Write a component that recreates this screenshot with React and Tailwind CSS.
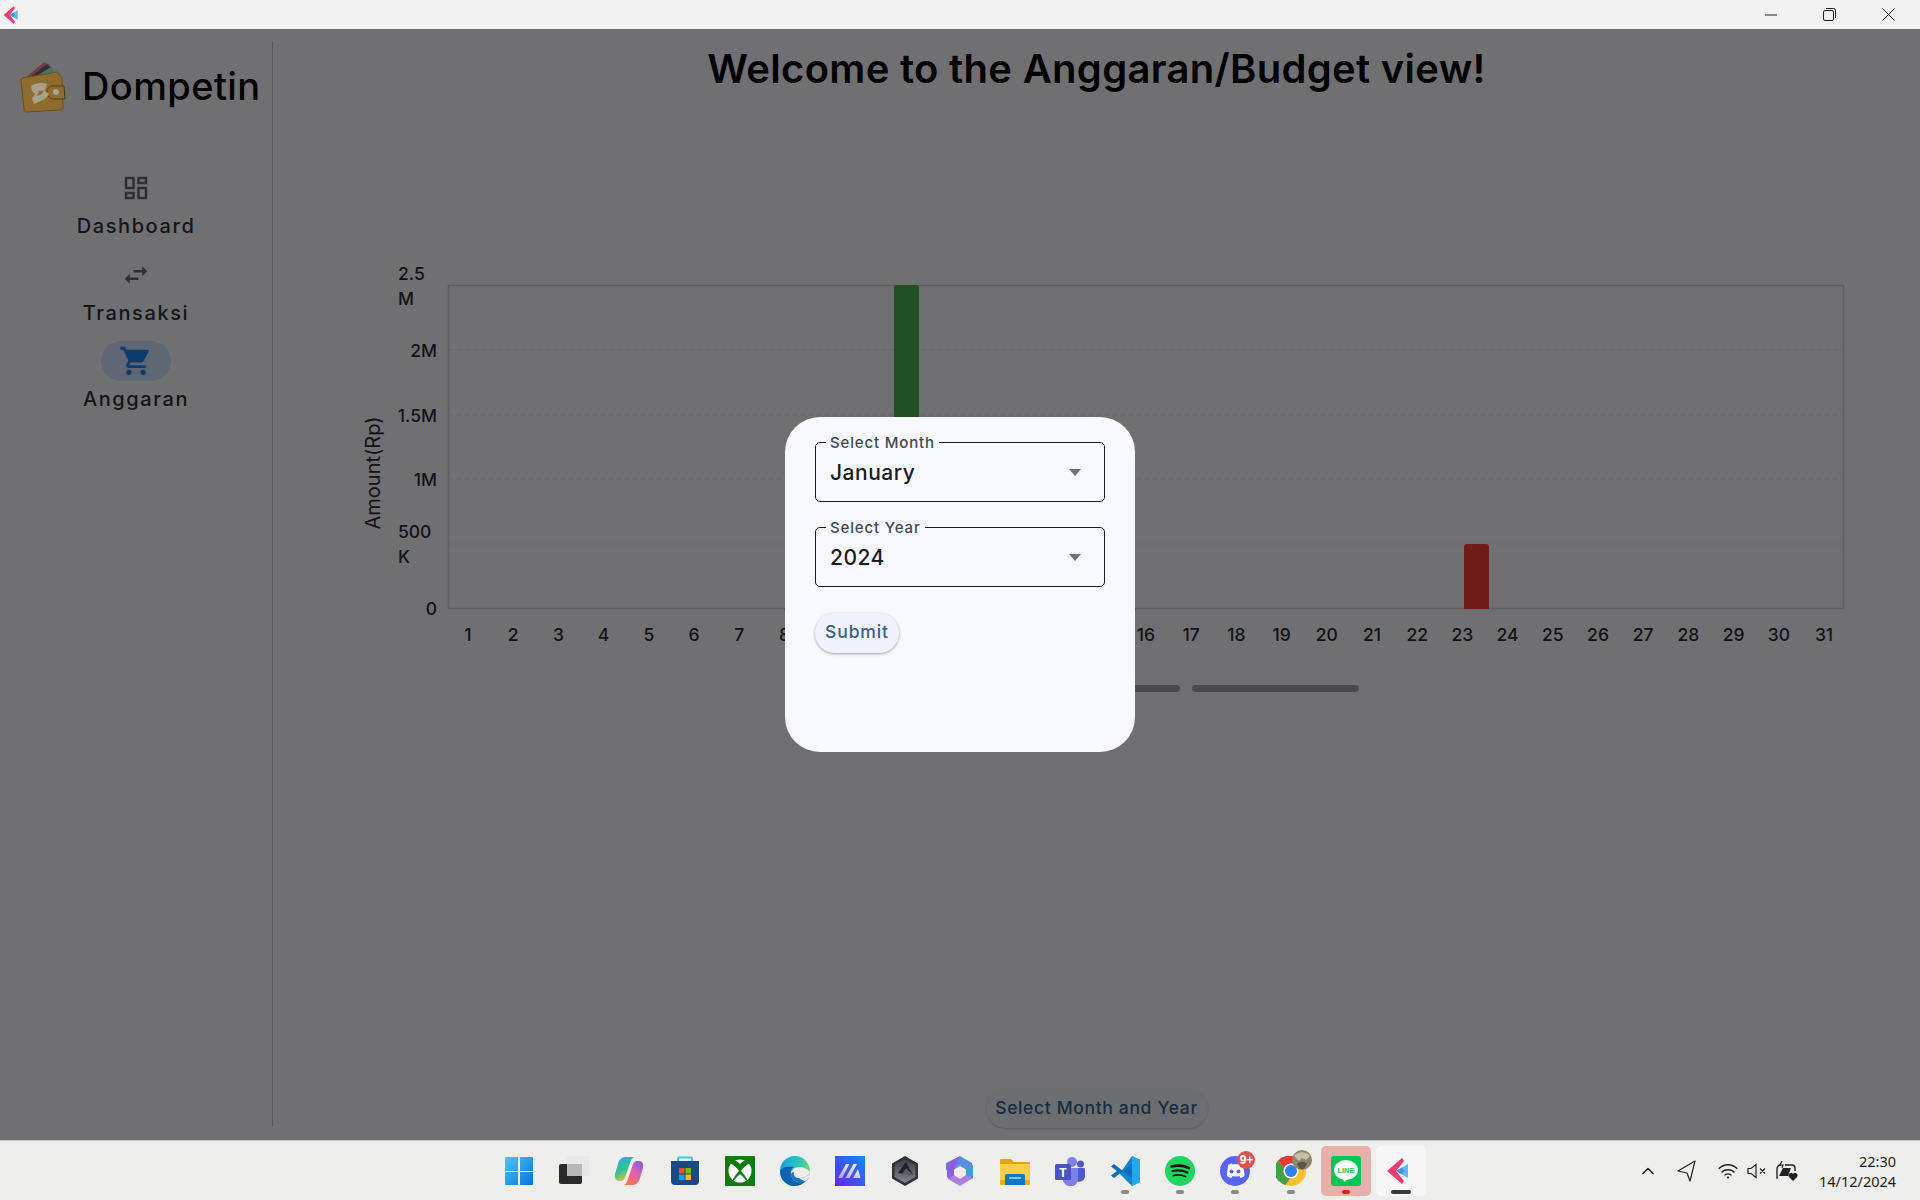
import { ChevronUp } from "lucide-react";

const days = Array.from({ length: 31 }, (_, i) => i + 1);
const gridLines = [350, 415, 479, 544];

function AppArrow({ size = 30 }) {
  return (
    <svg width={size} height={size} viewBox="0 0 30 30">
      <path d="M1 15 16 2l2 3-8 10 8 10-2 3z" fill="#ef3a72" />
      <path d="M22 8 10 15l12 7z" fill="#62b8ee" />
      <path d="M16 11.500 10 15l6 3.500 2-3.500z" fill="#4a8fd8" />
    </svg>
  );
}

// logo keeps its own colours over the scrim, it reads brighter than the dimmed page
function Logo() {
  return (
    <svg className="relative z-10" width="46" height="54" viewBox="0 0 46 54">
      <path d="M4 19 24 2l5 3L11 19z" fill="#7a3c38" />
      <path d="M9 18 27 4l5 4L15 18z" fill="#2f2d3d" />
      <path d="M13 18 31 7l6 8-6 3z" fill="#4c7361" />
      <path d="M3 18c10-2 25-4 33-6 2 0 3 1 3 3l3 3 1 29c0 2-1 3-3 3L7 52c-2 0-3-1-3-3L1 20c0-1 1-2 2-2z" fill="#8f6c2e" stroke="#66501f" strokeWidth="1" />
      <path d="M32 26h12l1 13H33c-3 0-6-3-6-7s3-6 5-6z" fill="#8f6c2e" stroke="#4e3a15" strokeWidth="1" />
      <circle cx="36" cy="32" r="3" fill="#aaa48e" />
      <path d="M11 26c4-3 11-4 16-2l-2 6-6 1-2 5 5-2 2-4 5 4-4 5-11 5-2-6 3-4-3-3z" fill="#a8a18a" />
    </svg>
  );
}

function NavItem({ icon, label, active }) {
  return (
    <div className="flex h-[86.5px] flex-col items-center">
      <div className={`flex h-10 w-[70px] items-center justify-center rounded-full ${active ? "bg-[#d1e4ff]" : ""}`}>
        {icon}
      </div>
      <div className="mt-[3px] h-[30px] text-[20px] leading-[30px] font-medium tracking-[1.6px] text-[#2f3136]">{label}</div>
    </div>
  );
}

function Chart() {
  return (
    <svg width="1647" height="420" viewBox="273 255 1647 420" className="block font-[Inter,sans-serif]">
      {gridLines.map((y) => (
        <line key={y} x1="449" x2="1843" y1={y} y2={y} stroke="#e2e2e7" strokeWidth="1" strokeDasharray="4 4" />
      ))}
      <rect x="448.5" y="285.5" width="1395" height="323" fill="none" stroke="#cfd0d4" strokeWidth="1.5" />
      <path d="M894 609V287a2 2 0 0 1 2-2h21a2 2 0 0 1 2 2v322z" fill="#4caf50" />
      <path d="M1464 609V547a3 3 0 0 1 3-3h19a3 3 0 0 1 3 3v62z" fill="#f44336" />
      <g fontSize="17.5" fontWeight="500" fill="#2b2c30">
        <text x="398" y="280">2.5</text>
        <text x="398" y="305">M</text>
        <text x="437" y="357" textAnchor="end">2M</text>
        <text x="437" y="422" textAnchor="end">1.5M</text>
        <text x="437" y="486" textAnchor="end">1M</text>
        <text x="398" y="538">500</text>
        <text x="398" y="563">K</text>
        <text x="437" y="615" textAnchor="end">0</text>
        {days.map((d) => (
          <text key={d} x={468 + (d - 1) * 45.2} y="641" textAnchor="middle">{d}</text>
        ))}
        <text transform="translate(380 473) rotate(-90)" textAnchor="middle" fontSize="20" fontWeight="400">Amount(Rp)</text>
      </g>
    </svg>
  );
}

function SelectField({ label, value }) {
  return (
    <div className="relative flex h-[60px] w-[290px] items-center justify-between rounded-[5px] border border-[#191c20] pr-[23px] pl-[14px]">
      <span className="absolute top-[-10px] left-[10px] bg-[#f8f9ff] px-1 text-[15px] leading-[20px] font-medium tracking-[0.85px] text-[#43474e]">{label}</span>
      <span className="pt-[2px] text-[21px] font-medium tracking-[0.5px] text-[#191c20]">{value}</span>
      <svg width="12" height="7" viewBox="0 0 12 7"><path d="M0 0h12L6 7z" fill="#6f7074" /></svg>
    </div>
  );
}

function TaskIcon({ children, dot, className = "" }) {
  return (
    <div className={`relative mx-[2.55px] flex h-[50px] w-[50px] items-center justify-center rounded-[5px] ${className}`}>
      {children}
      {dot && <div className={`absolute bottom-[2px] h-[4px] rounded-full ${dot}`} />}
    </div>
  );
}

function WindowsIcon() {
  return (
    <svg width="30" height="30" viewBox="0 0 30 30">
      <defs>
        <linearGradient id="win" x1="0" y1="0" x2="1" y2="1">
          <stop offset="0" stopColor="#4cc6fb" />
          <stop offset="1" stopColor="#0773d4" />
        </linearGradient>
      </defs>
      <path d="M1 2a1 1 0 0 1 1-1h12v14H1zM16 1h12a1 1 0 0 1 1 1v13H16zM1 16h13v13H2a1 1 0 0 1-1-1zM16 16h13v12a1 1 0 0 1-1 1H16z" fill="url(#win)" />
    </svg>
  );
}

function TaskView() {
  return (
    <svg width="30" height="30" viewBox="0 0 30 30">
      <rect x="0" y="8" width="23" height="20" rx="2" fill="#2a2a2a" />
      <rect x="8" y="0" width="22" height="20" rx="2" fill="#e8e8e8" />
      <rect x="8" y="8" width="15" height="12" fill="#b8b8b8" />
    </svg>
  );
}

function Copilot() {
  return (
    <svg width="30" height="30" viewBox="0 0 30 30">
      <defs>
        <linearGradient id="co1" x1="0.2" y1="0" x2="0.6" y2="1">
          <stop offset="0" stopColor="#2aa4e8" />
          <stop offset="0.55" stopColor="#3bc28e" />
          <stop offset="1" stopColor="#f4c23c" />
        </linearGradient>
        <linearGradient id="co2" x1="0.9" y1="0" x2="0.2" y2="1">
          <stop offset="0" stopColor="#7b5ee8" />
          <stop offset="0.5" stopColor="#e65fb0" />
          <stop offset="1" stopColor="#f6783c" />
        </linearGradient>
      </defs>
      <path d="M11 1h9c-2 1-3 3-4 6l-5 15c-1 2-2 3-4 3H5c-3 0-5-3-4-7l3-10c1-4 4-7 7-7z" fill="url(#co1)" />
      <path d="M19 29h-9c2-1 3-3 4-6l5-15c1-2 2-3 4-3h2c3 0 5 3 4 7l-3 10c-1 4-4 7-7 7z" fill="url(#co2)" />
    </svg>
  );
}

function Store() {
  return (
    <svg width="30" height="30" viewBox="0 0 30 30">
      <path d="M8 5V2.500a1 1 0 0 1 1-1h12a1 1 0 0 1 1 1V5" fill="none" stroke="#3ec5f4" strokeWidth="2" />
      <path d="M1 5h28v20a4 4 0 0 1-4 4H5a4 4 0 0 1-4-4z" fill="#1a4a84" />
      <rect x="9" y="12" width="5.500" height="5.500" fill="#f25022" />
      <rect x="15.500" y="12" width="5.500" height="5.500" fill="#7fba00" />
      <rect x="9" y="18.500" width="5.500" height="5.500" fill="#00a4ef" />
      <rect x="15.500" y="18.500" width="5.500" height="5.500" fill="#ffb900" />
    </svg>
  );
}

function Xbox() {
  return (
    <svg width="30" height="30" viewBox="0 0 30 30">
      <rect width="30" height="30" rx="1" fill="#107c10" />
      <circle cx="15" cy="15" r="11.500" fill="#fff" />
      <path d="M7 3c4 1 6 3 8 5 2-2 4-4 8-5l2 4c-4 2-7 5-9 8 3 3 6 7 7 11l-8-8-8 8c1-4 4-8 7-11-2-3-5-6-9-8z" fill="#107c10" />
    </svg>
  );
}

function Edge() {
  return (
    <svg width="30" height="30" viewBox="0 0 30 30">
      <defs>
        <linearGradient id="ed" x1="0" y1="0.3" x2="1" y2="0.5">
          <stop offset="0" stopColor="#1b9de2" />
          <stop offset="0.6" stopColor="#2fc4b8" />
          <stop offset="1" stopColor="#6fdc6c" />
        </linearGradient>
      </defs>
      <path d="M15 0C6 0 0 7 0 15c0 8 6 15 14 15 5 0 9-2 12-5-8 3-14 0-15-6-1-4 3-8 8-8 4 0 9 2 11 5 0-9-6-16-15-16z" fill="url(#ed)" />
      <path d="M0 15c0 8 6 15 14 15 5 0 9-2 12-5-8 3-14 0-15-6-1-4 1-7 3-8-6-1-13 0-14 4z" fill="#0f62b0" />
      <path d="M11 19c1 6 7 9 15 6 2-1 3-3 4-8-3 4-7 5-11 5-3 0-6-2-5-6-2 0-3 1-3 3z" fill="#1a78c8" />
      <path d="M19 22c4 0 8-1 11-5 0 4-2 6-4 8-2 0-5-1-7-3z" fill="#eeeeec" />
    </svg>
  );
}

function MaIcon() {
  return (
    <svg width="30" height="30" viewBox="0 0 30 30">
      <defs>
        <linearGradient id="ma" x1="0" y1="1" x2="1" y2="0">
          <stop offset="0" stopColor="#6a22f0" />
          <stop offset="1" stopColor="#0d8cf2" />
        </linearGradient>
        <linearGradient id="mb" x1="0" y1="1" x2="1" y2="0">
          <stop offset="0" stopColor="#a9a0f5" />
          <stop offset="1" stopColor="#ffffff" />
        </linearGradient>
      </defs>
      <rect width="30" height="30" fill="url(#ma)" />
      <path d="M3 22 11 8h3.500L7 22zM10.500 22 18.500 8H22l-7.500 14zM18 22 23 13l2.500 9z" fill="url(#mb)" />
    </svg>
  );
}

function HexIcon() {
  return (
    <svg width="30" height="30" viewBox="0 0 30 30">
      <defs>
        <linearGradient id="hx" x1="0" y1="0" x2="0" y2="1">
          <stop offset="0" stopColor="#3a3d42" />
          <stop offset="1" stopColor="#82868c" />
        </linearGradient>
      </defs>
      <path d="M15 0 28 7.500v15L15 30 2 22.500v-15z" fill="#303236" />
      <path d="M15 3 25.500 9v12L15 27 4.500 21V9z" fill="url(#hx)" />
      <path d="M16 6 23 19 8 17z" fill="#1e2023" />
      <path d="M16 12 23 19 12 18z" fill="#5a5d62" />
    </svg>
  );
}

function M365() {
  return (
    <svg width="30" height="30" viewBox="0 0 30 30">
      <path d="M15 0 27 7v8h-6l-6-4-6 4-8-1V7z" fill="#5a8fe0" />
      <path d="M3 7 15 0l-3 7-3 8v7l-5 1-2-2V9z" fill="#8a5fe0" />
      <path d="M21 12l7-3v13l-4 2-3-3z" fill="#3f9fd8" />
      <path d="M9 19l6 4 6-4 7 3-13 8L3 23z" fill="#b07ce0" />
      <path d="M15 10 21 13.500v4.500L15 21l-6-3v-4.500z" fill="#eeeeec" />
    </svg>
  );
}

function Folder() {
  return (
    <svg width="30" height="30" viewBox="0 0 30 30">
      <path d="M0 4a1 1 0 0 1 1-1h10l3 3h15a1 1 0 0 1 1 1v6H0z" fill="#e2a50c" />
      <path d="M0 8h30v20a1 1 0 0 1-1 1H1a1 1 0 0 1-1-1z" fill="#fbcf4a" />
      <path d="M0 24h30v4a1 1 0 0 1-1 1H1a1 1 0 0 1-1-1z" fill="#f0ae10" />
      <path d="M5 20a2 2 0 0 1 2-2h16a2 2 0 0 1 2 2v9H5z" fill="#1177c4" />
      <rect x="9" y="21" width="12" height="2" fill="#7cc4ee" />
    </svg>
  );
}

function Teams() {
  return (
    <svg width="30" height="30" viewBox="0 0 30 30">
      <circle cx="17" cy="6" r="5" fill="#7b83eb" />
      <circle cx="25.500" cy="8" r="3.500" fill="#5059c9" />
      <path d="M20 12h9a1 1 0 0 1 1 1v7a6 6 0 0 1-9 5z" fill="#5059c9" />
      <path d="M8 12h15v11a7 7 0 0 1-15 0z" fill="#7b83eb" />
      <rect x="0" y="8" width="16" height="16" rx="1.500" fill="#4b53bc" />
      <text x="8" y="21" textAnchor="middle" fontSize="12" fontWeight="700" fill="#fff" fontFamily="Liberation Sans, sans-serif">T</text>
    </svg>
  );
}

function VsCode() {
  return (
    <svg width="30" height="30" viewBox="0 0 30 30">
      <path d="M22 0 30 4v22l-8 4L9 17l4-4z" fill="#0e86d4" />
      <path d="M22 0 30 4v22l-8 4z" fill="#23a9f0" />
      <path d="M22 8v14L4 8 1 10.500 7 15l-6 4.500L4 22 22 8z" fill="#0b6fb8" />
    </svg>
  );
}

function Spotify() {
  return (
    <svg width="30" height="30" viewBox="0 0 30 30">
      <circle cx="15" cy="15" r="15" fill="#1ed760" />
      <g fill="none" stroke="#191414" strokeLinecap="round">
        <path d="M6.500 10.500c6-1.500 12-1 17.500 1.500" strokeWidth="2.600" />
        <path d="M7.500 15c5-1.200 10-.8 15 1.500" strokeWidth="2.200" />
        <path d="M8.500 19.500c4-1 8-.6 12 1" strokeWidth="1.800" />
      </g>
    </svg>
  );
}

function Discord() {
  return (
    <svg width="30" height="30" viewBox="0 0 30 30">
      <circle cx="15" cy="15" r="15" fill="#5865f2" />
      <path d="M8 9c2-1 3-1.500 4-1.500l.5 1c2-.3 3-.3 5 0l.5-1c1 0 2 .5 4 1.500 2 3 2.500 7 2.500 11-1.500 1.200-3 1.800-4 2l-1-1.500 1.500-1c-3 1.300-7 1.300-10 0l1.500 1L11 22c-1-.2-2.500-.8-4-2 0-4 .5-8 1-11z" fill="#fff" />
      <circle cx="11.500" cy="15.500" r="2" fill="#5865f2" />
      <circle cx="18.500" cy="15.500" r="2" fill="#5865f2" />
    </svg>
  );
}

function Chrome() {
  return (
    <svg width="30" height="30" viewBox="0 0 30 30">
      <circle cx="15" cy="15" r="15" fill="#fbc02d" />
      <path d="M15 0a15 15 0 0 1 13 7.500H15a7.500 7.500 0 0 0-7 5L2 4.500A15 15 0 0 1 15 0z" fill="#e53935" />
      <path d="M2 4.500 8 12.500a7.500 7.500 0 0 0 6 10L9.500 29A15 15 0 0 1 2 4.500z" fill="#43a047" />
      <circle cx="15" cy="15" r="7.500" fill="#fff" />
      <circle cx="15" cy="15" r="6" fill="#2f80ed" />
    </svg>
  );
}

function LineIcon() {
  return (
    <svg width="30" height="30" viewBox="0 0 30 30">
      <rect width="30" height="30" rx="3" fill="#06c755" />
      <ellipse cx="15" cy="14" rx="12" ry="10" fill="#fff" />
      <path d="M12 22h6l-5 4z" fill="#fff" />
      <text x="15" y="17" textAnchor="middle" fontSize="7.500" fontWeight="700" fill="#06c755" fontFamily="Liberation Sans, sans-serif">LINE</text>
    </svg>
  );
}

function ProfilePhoto() {
  return (
    <svg className="absolute top-[4px] right-[4px]" width="20" height="20" viewBox="0 0 20 20">
      <circle cx="10" cy="10" r="10" fill="#8a8470" />
      <path d="M2 6c4-5 12-5 16 0l-4 4-4-2-3 3z" fill="#c9bfa5" />
      <path d="M5 14c3-3 7-3 10 0l-3 5H8z" fill="#5a5648" />
    </svg>
  );
}

export default function App() {
  return (
    <div className="flex h-[1200px] w-[1920px] flex-col overflow-hidden bg-[#f8f9ff] font-[Inter,sans-serif]">
      <div className="flex h-[29px] items-center justify-between bg-[#f2f2f2]">
        <div className="ml-[3px]"><AppArrow size={20} /></div>
        <div className="mr-[2px] flex items-center">
          <div className="flex h-[29px] w-[58px] items-center justify-center">
            <svg width="12" height="2" viewBox="0 0 12 2"><path d="M0 1h12" stroke="#1f1f1f" /></svg>
          </div>
          <div className="flex h-[29px] w-[58px] items-center justify-center">
            <svg width="13" height="13" viewBox="0 0 13 13" fill="none" stroke="#1f1f1f">
              <rect x="0.500" y="2.500" width="10" height="10" rx="1.500" />
              <path d="M3 .500h7.500a2 2 0 0 1 2 2V10" />
            </svg>
          </div>
          <div className="flex h-[29px] w-[60px] items-center justify-center">
            <svg width="13" height="13" viewBox="0 0 13 13"><path d="M.5.500l12 12M12.500.500l-12 12" stroke="#1f1f1f" /></svg>
          </div>
        </div>
      </div>

      <div className="relative flex flex-1">
        <aside className="mt-3 mb-[13px] w-[273px] shrink-0 border-r border-[#c4c6cf] pt-[19px]">
          <div className="flex h-[53px] items-center gap-4 pl-5">
            <Logo />
            <span className="text-[38px] leading-[53px] font-medium tracking-[0.4px] text-black">Dompetin</span>
          </div>
          <nav className="mt-[55px]">
            <NavItem
              label="Dashboard"
              icon={
                <svg width="30" height="30" viewBox="0 0 24 24" fill="#68696f">
                  <path d="M19 5v2h-4V5h4M9 5v6H5V5h4m10 8v6h-4v-6h4M9 17v2H5v-2h4M21 3h-8v6h8V3zM11 3H3v10h8V3zm10 8h-8v10h8V11zM11 15H3v6h8v-6z" />
                </svg>
              }
            />
            <NavItem
              label="Transaksi"
              icon={
                <svg width="30" height="30" viewBox="0 0 24 24" fill="#68696f">
                  <path d="M6.990 11L3 15l3.990 4v-3H14v-2H6.990v-3zM21 9l-3.990-4v3H10v2h7.010v3L21 9z" />
                </svg>
              }
            />
            <NavItem
              active
              label="Anggaran"
              icon={
                <svg width="34" height="34" viewBox="0 0 24 24" fill="#1a86ee">
                  <path d="M7 18c-1.100 0-1.990.9-1.990 2S5.900 22 7 22s2-.9 2-2-.9-2-2-2zM1 2v2h2l3.600 7.590-1.350 2.450c-.16.28-.25.61-.25.96 0 1.100.9 2 2 2h12v-2H7.420c-.14 0-.25-.11-.25-.25l.03-.12.9-1.630h7.450c.75 0 1.410-.41 1.750-1.030l3.580-6.490c.08-.14.12-.31.12-.48 0-.55-.45-1-1-1H5.210l-.94-2H1zm16 16c-1.100 0-1.990.9-1.990 2s.89 2 1.990 2 2-.9 2-2-.9-2-2-2z" />
                </svg>
              }
            />
          </nav>
        </aside>

        <main className="flex min-w-0 flex-1 flex-col items-center pt-[10px]">
          <h1 className="text-[40px] leading-[60px] font-semibold tracking-[0.3px] text-black">Welcome to the Anggaran/Budget view!</h1>
          <div className="mt-[156px]">
            <Chart />
          </div>
          <div className="mt-[10px] flex gap-3">
            <div className="h-[7px] w-[346px] rounded-full bg-[#a5a5a5]" />
            <div className="h-[7px] w-[167px] rounded-full bg-[#a5a5a5]" />
          </div>
          <button className="mt-auto mb-[12px] flex h-10 w-[222px] items-center justify-center rounded-full bg-[#f2f3fa] text-[17.5px] font-medium tracking-[0.65px] text-[#36618e] shadow-[0_1px_2px_rgba(0,0,0,0.2)]">
            Select Month and Year
          </button>
        </main>

        <div className="absolute inset-0 flex items-center justify-center bg-black/55">
          <div className="flex h-[335px] w-[350px] flex-col rounded-[35px] bg-[#f8f9ff] pt-[25px] pl-[30px]">
            <SelectField label="Select Month" value="January" />
            <div className="mt-[25px]">
              <SelectField label="Select Year" value="2024" />
            </div>
            <button className="mt-[26px] h-10 w-[84px] rounded-full bg-[#f2f3fa] pb-[2px] text-[17.5px] font-medium tracking-[0.9px] text-[#36618e] shadow-[0_1px_3px_rgba(0,0,0,0.35)]">
              Submit
            </button>
          </div>
        </div>
      </div>

      <footer className="grid h-[60px] grid-cols-[1fr_auto_1fr] items-center border-t border-[#c6c6c6] bg-[#eeeeec]">
        <div />
        <div className="flex items-center">
          <TaskIcon><WindowsIcon /></TaskIcon>
          <TaskIcon><TaskView /></TaskIcon>
          <TaskIcon><Copilot /></TaskIcon>
          <TaskIcon><Store /></TaskIcon>
          <TaskIcon><Xbox /></TaskIcon>
          <TaskIcon><Edge /></TaskIcon>
          <TaskIcon><MaIcon /></TaskIcon>
          <TaskIcon><HexIcon /></TaskIcon>
          <TaskIcon><M365 /></TaskIcon>
          <TaskIcon><Folder /></TaskIcon>
          <TaskIcon><Teams /></TaskIcon>
          <TaskIcon dot="w-2 bg-[#8a8a8a]"><VsCode /></TaskIcon>
          <TaskIcon dot="w-2 bg-[#8a8a8a]"><Spotify /></TaskIcon>
          <TaskIcon dot="w-2 bg-[#8a8a8a]">
            <Discord />
            <span className="absolute top-[5px] right-[5px] flex h-[18px] w-[18px] items-center justify-center rounded-full bg-[#d9534f] font-[Liberation_Sans,sans-serif] text-[12px] font-bold text-white">9+</span>
          </TaskIcon>
          <TaskIcon dot="w-2 bg-[#8a8a8a]">
            <Chrome />
            <ProfilePhoto />
          </TaskIcon>
          <TaskIcon dot="w-[8px] bg-[#cc2a20]" className="bg-[#e9b0ab]"><LineIcon /></TaskIcon>
          <TaskIcon dot="w-5 bg-[#3a3a3a]" className="bg-[#f7f7f7]"><AppArrow /></TaskIcon>
        </div>
        <div className="flex items-center justify-end pr-6 text-[#1c1c1c]">
          <ChevronUp size={20} strokeWidth={1.8} />
          <svg className="ml-[19px]" width="20" height="22" viewBox="0 0 20 22" fill="none" stroke="#222" strokeWidth="1.200" strokeLinejoin="round">
            <path d="M18 1 1 11l9 2 3 8z" />
          </svg>
          <svg className="ml-[21px]" width="20" height="16" viewBox="0 0 20 16" fill="none" stroke="#222" strokeWidth="1.300" strokeLinecap="round">
            <path d="M1 5.500c5-5 13-5 18 0M4 9c3-3 9-3 12 0M7 12c2-1.500 4-1.500 6 0" />
            <circle cx="10" cy="14.500" r="1" fill="#222" stroke="none" />
          </svg>
          <svg className="ml-[9px]" width="20" height="16" viewBox="0 0 20 16" fill="none" stroke="#222" strokeWidth="1.200">
            <path d="M1 5.500h3L9 1.500v13L4 10.500H1zM13 5.500l5 5M18 5.500l-5 5" />
          </svg>
          <svg className="ml-[8px]" width="24" height="22" viewBox="0 0 24 22" fill="none" stroke="#222" strokeWidth="1.400">
            <path d="M10 5h7c2 0 3 1 3 3v3M3 18H2v-8c0-3 1-5 4-5" />
            <path d="M4 16 8 8h8l-3 8z" fill="#222" stroke="none" />
            <path d="M7 1 5 5h3l-1 3" strokeWidth="1.200" />
            <path d="M18 21l-4-4a2.500 2.500 0 0 1 4-3 2.500 2.500 0 0 1 4 3z" fill="#222" stroke="none" />
          </svg>
          <div className="ml-5 w-[77px] text-right font-[Noto_Sans,sans-serif] text-[14.5px] leading-[20px] text-[#1c1c1c]">
            <div>22:30</div>
            <div className="whitespace-nowrap">14/12/2024</div>
          </div>
        </div>
      </footer>
    </div>
  );
}
